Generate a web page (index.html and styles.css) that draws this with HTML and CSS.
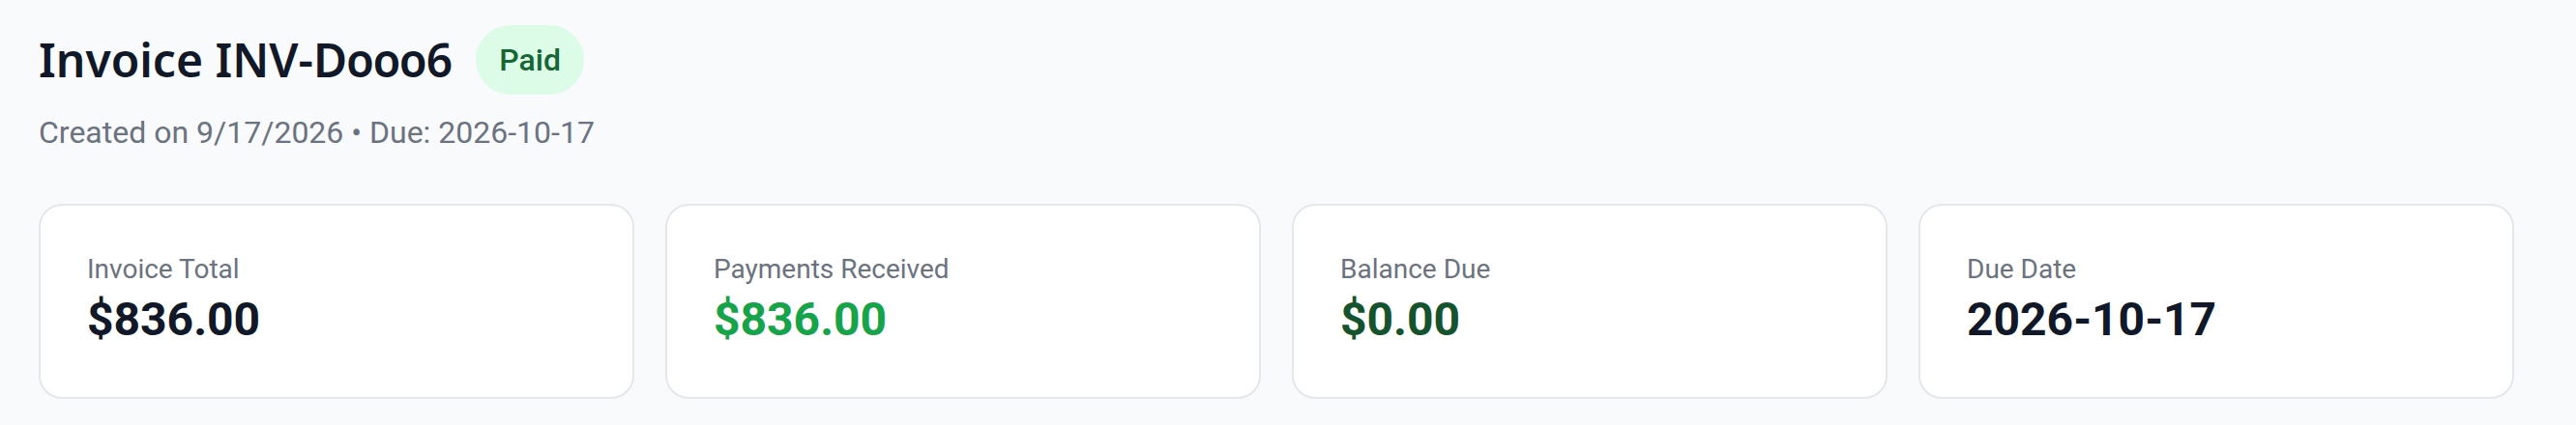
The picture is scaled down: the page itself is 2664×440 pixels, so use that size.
FILE: index.html
```html
<!DOCTYPE html>
<html lang="en">
<head>
<meta charset="utf-8">
<title>Invoice INV-D0006</title>
<link rel="stylesheet" href="styles.css">
</head>
<body>
<main class="page">
  <header class="head">
    <div class="title-row">
      <h1 class="title">Invoice INV-D0006</h1>
      <span class="badge">Paid</span>
    </div>
    <p class="subtitle">Created on 9/17/2026 • Due: 2026-10-17</p>
  </header>
  <section class="stats">
    <div class="card">
      <div class="label">Invoice Total</div>
      <div class="value">$836.00</div>
    </div>
    <div class="card">
      <div class="label">Payments Received</div>
      <div class="value value-green">$836.00</div>
    </div>
    <div class="card">
      <div class="label">Balance Due</div>
      <div class="value value-dark-green">$0.00</div>
    </div>
    <div class="card">
      <div class="label">Due Date</div>
      <div class="value">2026-10-17</div>
    </div>
  </section>
</main>
</body>
</html>
```

FILE: styles.css
```css
* {
  box-sizing: border-box;
}

html, body {
  margin: 0;
  padding: 0;
}

body {
  background: #f9fafb;
  font-family: Roboto, "Liberation Sans", Arial, sans-serif;
  color: #111827;
}

.page {
  padding: 26px 40px 0;
  width: 2640px;
}

.title-row {
  display: flex;
  align-items: center;
  gap: 24px;
}

.title {
  margin: 0;
  font-family: "Noto Sans", Lato, sans-serif;
  font-variant-numeric: oldstyle-nums;
  font-size: 48px;
  line-height: 64px;
  font-weight: 600;
  color: #111827;
}

.badge {
  display: inline-block;
  padding: 12px 24px;
  font-size: 32px;
  line-height: 48px;
  font-weight: 500;
  color: #166534;
  background: #dcfce7;
  border-radius: 9999px;
}

.subtitle {
  margin: 15px 0 0;
  font-size: 32px;
  line-height: 48px;
  color: #6b7280;
}

.stats {
  margin-top: 50px;
  width: 2560px;
  display: grid;
  grid-template-columns: repeat(4, 1fr);
  gap: 32px;
}

.card {
  background: #ffffff;
  border: 2px solid #e5e7eb;
  border-radius: 24px;
  padding: 46px 48px 48px;
}

.label {
  font-size: 28px;
  line-height: 40px;
  color: #6b7280;
}

.value {
  font-size: 48px;
  line-height: 64px;
  font-weight: 700;
  color: #111827;
}

.value-green {
  color: #16a34a;
}

.value-dark-green {
  color: #14532d;
}
```
